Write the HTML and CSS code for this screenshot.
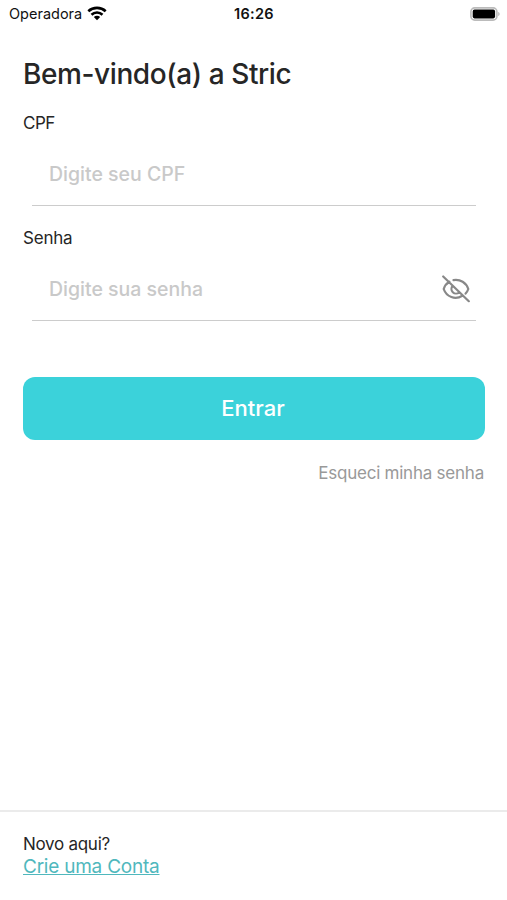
FILE: index.html
```html
<!DOCTYPE html>
<html lang="pt-BR">
<head>
<meta charset="utf-8">
<title>Stric</title>
<link rel="stylesheet" href="styles.css">
</head>
<body>
<div class="screen">
  <header class="status">
    <div class="carrier"><span class="carrier-name">Operadora</span>
      <svg class="wifi" viewBox="0 0 20 15"><path d="M1.3 5.2C6.1.7 13.9.7 18.7 5.2M4.5 8.7c3.1-2.9 7.9-2.9 11 0" fill="none" stroke="#000" stroke-width="2.6"/><path d="M6.8 11c1.8-1.6 4.6-1.6 6.4 0L10 14.3z"/></svg>
    </div>
    <time class="clock">16:26</time>
    <svg class="battery" viewBox="0 0 30 14"><rect x=".9" y=".9" width="26" height="12.2" rx="3.8" fill="none" stroke="#bbb" stroke-width="1.6"/><rect x="2.7" y="2.6" width="22.4" height="8.8" rx="1.8"/><path d="M28.2 4.9c1.9.7 1.9 3.5 0 4.2z" fill="#bbb"/></svg>
  </header>
  <main class="login">
    <h1 class="title">Bem-vindo(a) a Stric</h1>
    <label class="label cpf-label" for="cpf">CPF</label>
    <div class="field"><input class="input" id="cpf" placeholder="Digite seu CPF"></div>
    <label class="label second" for="senha">Senha</label>
    <div class="field"><input class="input" id="senha" type="password" placeholder="Digite sua senha">
      <svg class="eye" viewBox="0 0 28 28"><path d="M1.2 1.5l25.6 24.7M7.4 6.7C4.6 8.3 2.6 10.9 1.7 14c2.7 8 11.6 11.2 18.6 6.7M11.5 5.1C18.3 4 24.2 7.7 26.3 14c-.6 1.8-1.4 3.2-2.7 4.6M10.8 10.8a4.5 4.5 0 0 0 6.4 6.4" fill="none" stroke="#888" stroke-width="2.2" stroke-linecap="round"/></svg>
    </div>
    <button class="submit">Entrar</button>
    <a class="forgot">Esqueci minha senha</a>
  </main>
  <footer class="signup">
    <span class="new">Novo aqui?</span>
    <a class="create">Crie uma Conta</a>
  </footer>
</div>
</body>
</html>
```

FILE: styles.css
```css
* { box-sizing: border-box; }
body { margin: 0; background: #fff; font-family: Inter, sans-serif; color: #262626; }
.screen { height: 900px; display: flex; flex-direction: column; }
.status { height: 27px; display: grid; grid-template-columns: 1fr auto 1fr; align-items: center; padding: 0 7px 0 9px; color: #111; }
.carrier { display: flex; align-items: center; gap: 5px; font-size: 14.5px; }
.wifi { width: 20px; height: 15px; margin-bottom: 1px; }
.clock { margin-right: 1px; font-size: 14.5px; font-weight: 600; letter-spacing: .3px; }
.battery { width: 30px; height: 14px; justify-self: end; }
.login { flex: 1; display: flex; flex-direction: column; padding: 29px 22px 0 23px; }
.title { margin: 0; font-size: 28px; line-height: 36px; font-weight: 500; letter-spacing: -.4px; }
.label { font-size: 17px; line-height: 22px; margin-top: 20px; letter-spacing: -.2px; }
.cpf-label { letter-spacing: -.5px; }
.field { height: 62px; margin: 10px 9px 0; display: flex; align-items: center; padding: 0 6px 2px 17px; border-bottom: 1px solid #ccc; }
.input { flex: 1; min-width: 0; padding: 0; border: 0; outline: 0; background: none; font: 500 19.5px/26px Inter, sans-serif; }
.input::placeholder { color: #c9c9c9; opacity: 1; }
.second { margin-top: 21px; }
.eye { width: 28px; height: 28px; }
.submit { height: 63px; margin-top: 56px; padding: 0 2px 2px 0; border: 0; border-radius: 12px; background: #3bd2da; color: #fff; font: 500 22px/28px Inter, sans-serif; }
.forgot { align-self: flex-end; margin: 22px 1px 0 0; font-size: 17px; line-height: 22px; letter-spacing: -.23px; color: #999; }
.signup { height: 90px; border-top: 2px solid #ebebeb; display: flex; flex-direction: column; align-items: flex-start; padding: 21px 23px 0; }
.new { font-size: 17px; line-height: 22px; letter-spacing: -.28px; }
.create { font-size: 19px; line-height: 23px; letter-spacing: -.23px; color: #50b8bd; text-decoration: underline; }
```
